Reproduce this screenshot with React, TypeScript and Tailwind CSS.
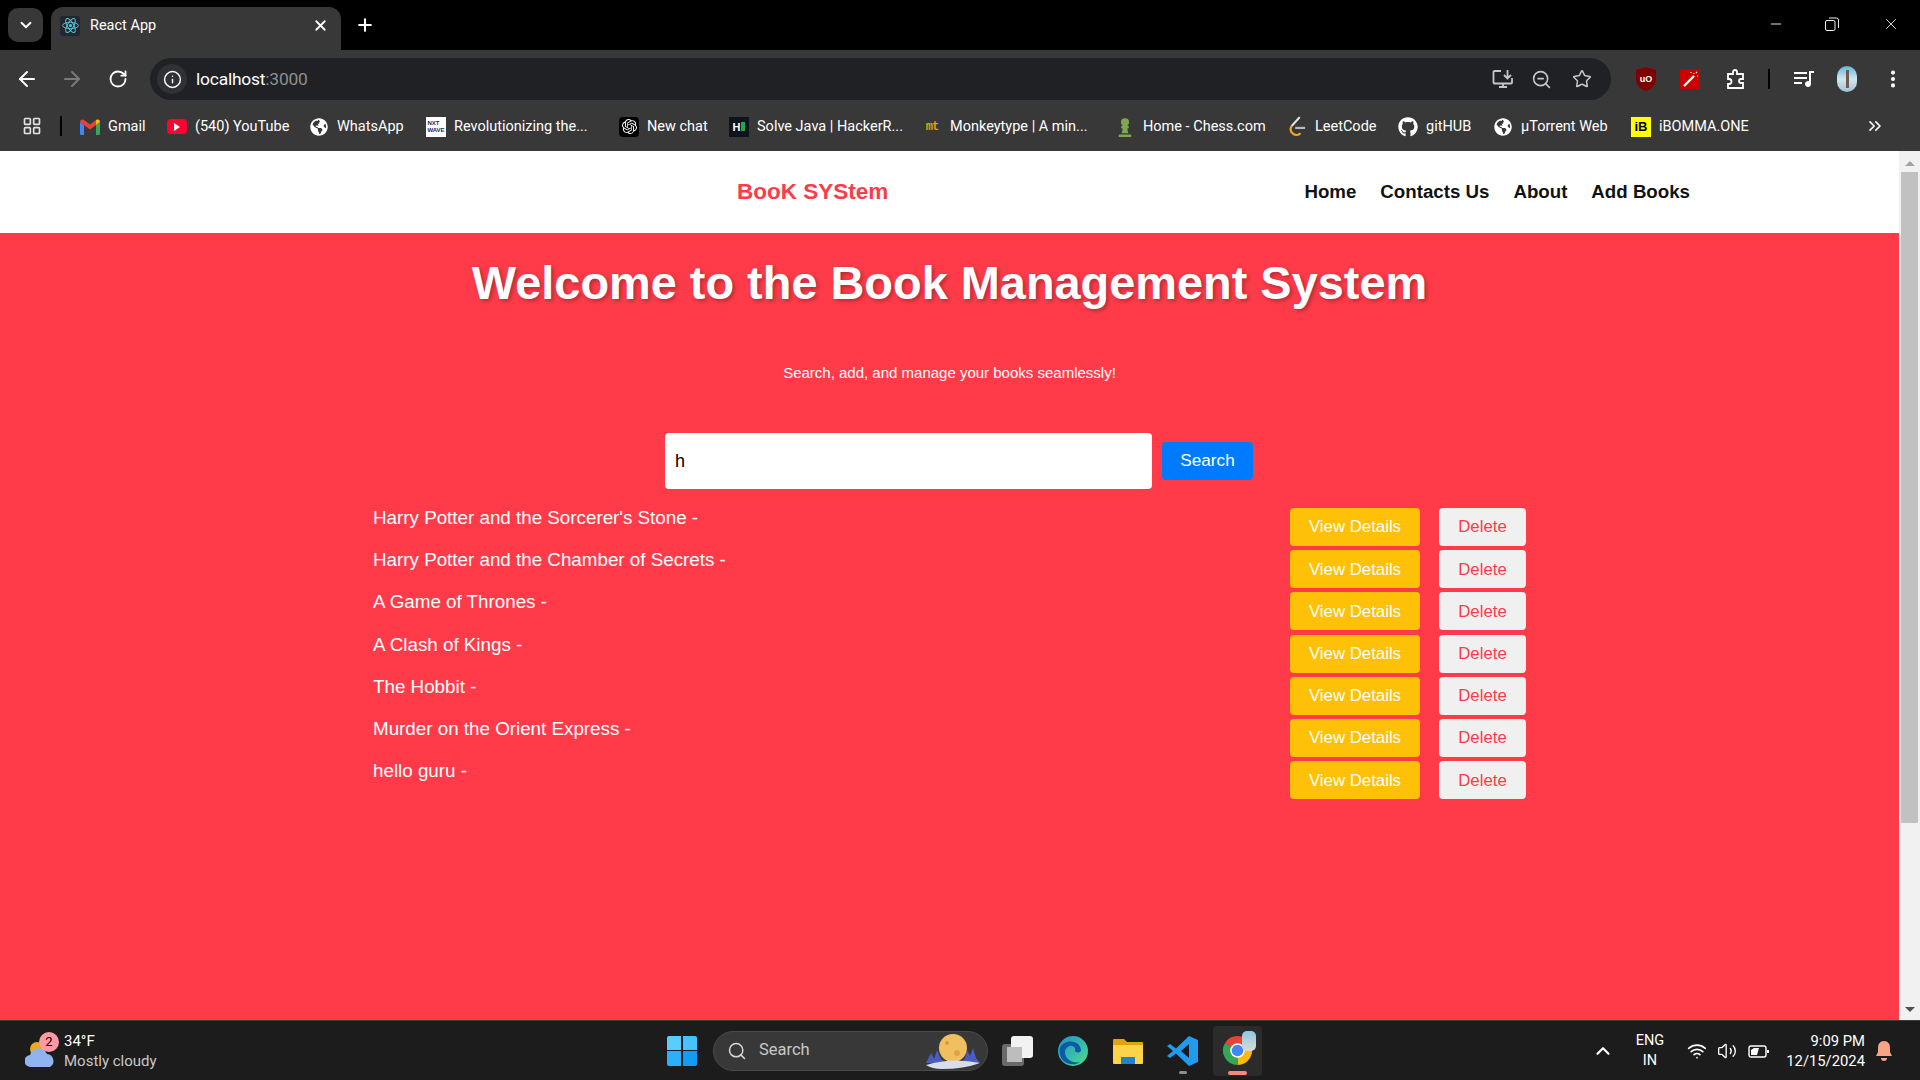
import { ArrowLeft, ArrowRight, ChevronDown, ChevronUp, ChevronsRight, EllipsisVertical, Info, LayoutGrid, Minus, Plus, RotateCw, Search, Star, Volume2, Wifi, X, ZoomOut } from 'lucide-react'
import { FaChessPawn, FaGithub, FaGlobeAmericas } from 'react-icons/fa'
import { SiOpenai } from 'react-icons/si'
import type { ReactNode } from 'react'

const books = [
  "Harry Potter and the Sorcerer's Stone",
  'Harry Potter and the Chamber of Secrets',
  'A Game of Thrones',
  'A Clash of Kings',
  'The Hobbit',
  'Murder on the Orient Express',
  'hello guru',
]

function ReactLogo({ className }: { className: string }) {
  return (
    <svg viewBox="0 0 24 24" fill="none" stroke="#58c4dc" strokeWidth="1.2" className={className}>
      <circle cx="12" cy="12" r="2" fill="#58c4dc" stroke="none" />
      <ellipse cx="12" cy="12" rx="10" ry="4" />
      <ellipse cx="12" cy="12" rx="10" ry="4" transform="rotate(60 12 12)" />
      <ellipse cx="12" cy="12" rx="10" ry="4" transform="rotate(120 12 12)" />
    </svg>
  )
}

function GmailLogo() {
  return (
    <svg viewBox="0 0 20 16" className="h-4 w-5">
      <path d="M0 3v11.5A1.5 1.5 0 0 0 1.5 16H4V6z" fill="#4285f4" />
      <path d="M16 6v10h2.5a1.500 1.500 0 0 0 1.500-1.500V3z" fill="#34a853" />
      <path d="M0 3a2.500 2.500 0 0 1 4-2l6 4.500L16 1a2.500 2.500 0 0 1 4 2l-4 3-6 4.500L4 6z" fill="#ea4335" />
      <path d="M16 1a2.500 2.500 0 0 1 4 2l-4 3z" fill="#fbbc04" />
    </svg>
  )
}

function YouTubeLogo() {
  return (
    <div className="flex h-[15px] w-5 items-center justify-center rounded-[4px] bg-[#ff0033]">
      <div className="h-0 w-0 border-y-[4px] border-l-[6px] border-y-transparent border-l-white" />
    </div>
  )
}

function LeetLogo() {
  return (
    <svg viewBox="0 0 20 24" fill="none" strokeWidth="2.400" className="h-6 w-[18px]">
      <path d="M13 1 4 11" stroke="#e8e8e8" />
      <path d="M4 11c-2 3-1 6 1 8s6 3 9 0" stroke="#f5a623" />
      <path d="M8 13h11" stroke="#b8b8b8" />
    </svg>
  )
}

function ChromeLogo() {
  return (
    <svg viewBox="0 0 32 32" className="h-[31px] w-[31px]">
      <path d="M16 16 3 8.500A15 15 0 0 1 29 8.500z" fill="#ea4335" />
      <path d="M16 16 29 8.500A15 15 0 0 1 16 31z" fill="#fbbc04" />
      <path d="M16 16 16 31A15 15 0 0 1 3 8.500z" fill="#34a853" />
      <circle cx="16" cy="16" r="7.500" fill="#fff" />
      <circle cx="16" cy="16" r="6" fill="#4285f4" />
    </svg>
  )
}

function TabBar() {
  return (
    <div className="flex h-[50px] items-end bg-black text-white">
      <div className="mb-2 ml-2 flex h-[34px] w-[35px] items-center justify-center rounded-[10px] bg-[#383838]">
        <ChevronDown size={18} strokeWidth={2.500} />
      </div>
      <div className="ml-2 flex h-[43px] w-[290px] items-center rounded-t-[12px] bg-[#383838] pb-[6px] pl-[9px] pr-[12px]">
        <div className="flex h-5 w-5 items-center justify-center rounded-[3px] bg-[#23272f]">
          <ReactLogo className="h-[19px] w-[19px]" />
        </div>
        <span className="ml-[10px] flex-1 font-['Roboto',sans-serif] text-[14.500px]">React App</span>
        <X size={17} strokeWidth={2.500} />
      </div>
      <Plus size={20} strokeWidth={2.500} className="mb-[15px] ml-[14px]" />
      <div className="mb-[17px] ml-auto mr-[20px] flex items-center text-[#f0f0f0]">
        <Minus size={16} strokeWidth={1.400} />
        <svg viewBox="0 0 14 14" fill="none" stroke="currentColor" className="ml-[41px] h-[14px] w-[14px]">
          <rect x="0.500" y="3.500" width="9.500" height="10" rx="1.500" />
          <path d="M4 1h7.500A2 2 0 0 1 13.500 3v8" />
        </svg>
        <X size={18} strokeWidth={1.200} className="ml-[43px]" />
      </div>
    </div>
  )
}

function ToolBar() {
  return (
    <div className="flex h-[50px] items-start bg-[#383838] pt-2 text-white">
      <div className="ml-[15px] flex h-[42px] items-center">
        <ArrowLeft size={24} strokeWidth={2} />
        <ArrowRight size={24} strokeWidth={2} className="ml-[21px] text-[#7a7a7a]" />
        <RotateCw size={20} strokeWidth={2.200} className="ml-6" />
      </div>
      <div className="ml-[22px] flex h-[42px] w-[1461px] items-center rounded-full bg-[#202124] pl-[7px] pr-[19px]">
        <div className="flex h-[30px] w-[30px] items-center justify-center rounded-full bg-[#303134]">
          <Info size={19} strokeWidth={1.800} />
        </div>
        <span className="ml-[9px] flex-1 pt-[1px] font-['Roboto',sans-serif] text-[17.400px] tracking-[-0.2px]">
          localhost<span className="text-[#8f8f8f]">:3000</span>
        </span>
        <svg viewBox="0 0 22 20" fill="none" stroke="#c4c7c5" strokeWidth="1.800" className="h-5 w-[22px]">
          <path d="M9 2H2.500a1 1 0 0 0-1 1v10.500a1 1 0 0 0 1 1H19a1 1 0 0 0 1-1V9M7 18h8M11 15v3M15.500 1v8M12 6l3.500 3.500L19 6" />
        </svg>
        <ZoomOut size={21} strokeWidth={1.800} className="ml-[17px] text-[#c4c7c5]" />
        <Star size={20} strokeWidth={1.800} className="ml-[20px] text-[#c4c7c5]" />
      </div>
      <div className="ml-[25px] flex h-[42px] items-center">
        <svg viewBox="0 0 20 24" className="h-6 w-5">
          <path d="M10 0 20 3v9c0 6-4 10-10 12C4 22 0 18 0 12V3z" fill="#800000" />
          <text x="10" y="15" textAnchor="middle" fontSize="9" fontWeight="700" fill="#fff" fontFamily="Liberation Sans, sans-serif">uO</text>
        </svg>
        <div className="ml-[24px] flex h-5 w-5 items-center justify-center bg-[#cc0000]">
          <svg viewBox="0 0 20 20" fill="none" stroke="#fff" strokeWidth="2.400" className="h-5 w-5">
            <path d="M4 17 14 7" />
            <path d="M14 4v1M17 7h1M11 3v1M16 3l1 1" strokeWidth="1.200" />
          </svg>
        </div>
        <svg viewBox="0 0 20 20" fill="none" stroke="#fff" strokeWidth="1.800" className="ml-[26px] h-5 w-5">
          <path d="M2 5h5V3a2 2 0 0 1 4 0v2h6v5h-2a2 2 0 0 0 0 4h2v5H2v-4h1a2.500 2.500 0 0 0 0-5H2z" />
        </svg>
        <div className="ml-[22px] h-5 w-[2px] bg-black" />
        <svg viewBox="0 0 20 20" fill="#fff" className="ml-[24px] h-5 w-5">
          <path d="M0 3h13v2H0zM0 8h13v2H0zM0 13h8v2H0zM15 2h5v2h-3v11a3 3 0 1 1-2-2.800z" />
        </svg>
        <div className="ml-[23px] flex h-[26px] w-[20px] justify-center overflow-hidden rounded-full bg-gradient-to-b from-[#5fb4dc] via-[#d5e6ee] to-[#9fc2d4]">
          <div className="mt-1 h-[18px] w-[3px] bg-[#6d5b50]" />
        </div>
        <EllipsisVertical size={22} strokeWidth={2.500} className="ml-[25px]" />
      </div>
    </div>
  )
}

function Bookmark({ icon, label, className }: { icon: ReactNode; label: string; className: string }) {
  return (
    <div className={`flex shrink-0 items-center ${className}`}>
      <div className="flex h-5 w-5 shrink-0 items-center justify-center">{icon}</div>
      <span className="ml-2 whitespace-nowrap pt-[1px]">{label}</span>
    </div>
  )
}

function BookmarksBar() {
  return (
    <div className="flex h-[51px] items-start bg-[#383838] pt-[16px] font-['Roboto',sans-serif] text-[14.500px] leading-5 text-white">
      <LayoutGrid size={20} strokeWidth={2} className="ml-[22px] shrink-0 text-[#e3e3e3]" />
      <div className="ml-[18px] h-5 w-[2px] shrink-0 bg-black" />
      <Bookmark className="ml-[18px] w-[67px]" icon={<GmailLogo />} label="Gmail" />
      <Bookmark className="ml-[20px] w-[124px]" icon={<YouTubeLogo />} label="(540) YouTube" />
      <Bookmark className="ml-[18px] w-[97px]" icon={<FaGlobeAmericas size={18} />} label="WhatsApp" />
      <Bookmark
        className="ml-[20px] w-[166px]"
        icon={
          <div className="flex h-5 w-5 items-center justify-center bg-white font-['Liberation_Sans',sans-serif] text-[6px] font-bold leading-[7px] text-[#1a2a5a]">
            NXT<br />WAVE
          </div>
        }
        label="Revolutionizing the..."
      />
      <Bookmark
        className="ml-[27px] w-[90px]"
        icon={
          <div className="flex h-5 w-5 items-center justify-center rounded-[4px] bg-black">
            <SiOpenai size={15} />
          </div>
        }
        label="New chat"
      />
      <Bookmark
        className="ml-[20px] w-[172px]"
        icon={
          <div className="flex h-5 w-5 items-center justify-center gap-[1px] bg-[#0e141e]">
            <span className="font-['Liberation_Sans',sans-serif] text-[11px] font-bold">H</span>
            <div className="h-[9px] w-[4px] bg-[#1ba94c]" />
          </div>
        }
        label="Solve Java | HackerR..."
      />
      <Bookmark
        className="ml-[21px] w-[170px]"
        icon={<span className="font-['Liberation_Mono',monospace] text-[12px] font-bold tracking-[-1px] text-[#d8a600]">mt</span>}
        label="Monkeytype | A min..."
      />
      <Bookmark className="ml-[23px] w-[149px]" icon={<FaChessPawn size={20} className="text-[#7fa650]" />} label="Home - Chess.com" />
      <Bookmark className="ml-[23px] w-[88px]" icon={<LeetLogo />} label="LeetCode" />
      <Bookmark className="ml-[23px] w-[74px]" icon={<FaGithub size={20} />} label="gitHUB" />
      <Bookmark className="ml-[21px] w-[115px]" icon={<FaGlobeAmericas size={18} />} label="µTorrent Web" />
      <Bookmark
        className="ml-[23px] w-[121px]"
        icon={
          <div className="flex h-5 w-5 items-center justify-center bg-[#ffff00] font-['Liberation_Sans',sans-serif] text-[13px] font-bold text-black">
            iB
          </div>
        }
        label="iBOMMA.ONE"
      />
      <ChevronsRight size={20} strokeWidth={2} className="ml-[113px] shrink-0" />
    </div>
  )
}

function NavBar() {
  return (
    <nav className="flex h-[82px] shrink-0 items-center bg-white pl-[737px] pr-[209px] font-bold">
      <span className="text-[22.500px] text-[#ff3b4a]">BooK SYStem</span>
      <div className="ml-auto flex gap-[24px] text-[18.700px] text-[#111]">
        <a>Home</a>
        <a>Contacts Us</a>
        <a>About</a>
        <a>Add Books</a>
      </div>
    </nav>
  )
}

function BookRow({ title }: { title: string }) {
  return (
    <li className="flex h-[42.200px] items-start text-[16.800px]">
      <span className="flex-1 text-[18.800px] leading-5 text-white">{title} -</span>
      <button className="h-[38px] w-[130px] rounded-[4px] bg-[#ffc107] text-white">View Details</button>
      <button className="ml-[19px] h-[38px] w-[87px] rounded-[4px] bg-[#f0f0f0] text-[#ff3b4a]">Delete</button>
    </li>
  )
}

function Hero() {
  return (
    <main className="flex flex-1 flex-col bg-[#ff3b4a] pt-[23px]">
      <h1 className="text-center text-[46.900px] font-bold leading-[55px] text-white [text-shadow:2px_2px_4px_rgba(0,0,0,0.3)]">
        Welcome to the Book Management System
      </h1>
      <p className="mt-[53px] text-center text-[15px] leading-[18px] text-white">
        Search, add, and manage your books seamlessly!
      </p>
      <div className="ml-[665px] mt-[51px] flex items-center">
        <input
          readOnly
          value="h"
          className="h-[56px] w-[487px] rounded-[4px] bg-white px-[10px] text-[18px] text-black outline-none"
        />
        <button className="ml-[10px] h-[38px] w-[91px] rounded-[4px] bg-[#007bff] text-[17.200px] text-white">Search</button>
      </div>
      <ul className="ml-[373px] mt-[19px] w-[1153px]">
        {books.map((book) => (
          <BookRow key={book} title={book} />
        ))}
      </ul>
    </main>
  )
}

function ScrollBar() {
  return (
    <div className="flex w-[21px] shrink-0 flex-col items-center bg-[#f1f1f1]">
      <div className="mt-[10px] h-0 w-0 border-x-[5px] border-b-[5px] border-x-transparent border-b-[#a3a3a3]" />
      <div className="mt-[6px] h-[651px] w-[17px] bg-[#c1c1c1]" />
      <div className="mb-[8px] mt-auto h-0 w-0 border-x-[5px] border-t-[5px] border-x-transparent border-t-[#505050]" />
    </div>
  )
}

function TaskBar() {
  return (
    <div className="flex h-[60px] shrink-0 items-center border-t border-[#3a3a3a] bg-[#1c1c1c] font-['Roboto',sans-serif] text-white">
      <div className="ml-[25px] flex w-[642px] items-center">
        <div className="relative h-[36px] w-[32px]">
          <svg viewBox="0 0 32 36" className="h-[36px] w-[32px]">
            <circle cx="12" cy="16" r="7" fill="#f2a81d" />
            <path d="M6 34a6 6 0 0 1-1-12 9 9 0 0 1 17-1 7 7 0 0 1 3 13z" fill="#8fb4f0" />
          </svg>
          <div className="absolute -top-[1px] left-[14px] flex h-5 w-5 items-center justify-center rounded-full bg-[#ff9aa5] text-[13px] text-black">2</div>
        </div>
        <div className="ml-[7px] text-[15px] leading-[20px]">
          <div>34°F</div>
          <div className="text-[#c8c8c8]">Mostly cloudy</div>
        </div>
      </div>
      <div className="grid h-[30px] w-[30px] grid-cols-2 gap-[1.500px]">
        <div className="rounded-tl-[2px] bg-[#59cdff]" />
        <div className="rounded-tr-[2px] bg-[#45c2ff]" />
        <div className="rounded-bl-[2px] bg-[#2bb0fb]" />
        <div className="rounded-br-[2px] bg-[#129cf5]" />
      </div>
      <div className="ml-[16px] flex h-[40px] w-[275px] items-center rounded-full border border-[#4a4a4a] bg-[#383838] pl-[13px] pr-[6px]">
        <Search size={20} strokeWidth={1.800} className="text-[#d8d8d8]" />
        <span className="ml-[12px] flex-1 text-[16.500px] text-[#c8c8c8]">Search</span>
        <svg viewBox="0 0 56 36" className="h-[36px] w-[56px]">
          <circle cx="28" cy="15" r="14" fill="#f0c060" />
          <circle cx="22" cy="10" r="2" fill="#d89a48" />
          <circle cx="32" cy="20" r="3" fill="#e0a050" />
          <path d="M1 30 6 20l3 6 3-9 4 9 6 4H36l4-5 2-8 3 6 3-8 3 10 4 5z" fill="#4a5cc0" />
          <path d="M1 32q26-8 54-2-16 6-38 6-10 0-16-4z" fill="#d8dde8" />
        </svg>
      </div>
      <div className="relative ml-[14px] h-[30px] w-[31px]">
        <div className="absolute bottom-0 left-0 h-[22px] w-[22px] rounded-[3px] bg-[#6a6a6a]" />
        <div className="absolute right-0 top-0 h-[22px] w-[22px] rounded-[3px] bg-[#f2f2f2]" />
        <div className="absolute bottom-[4px] left-[5px] h-[15px] w-[15px] bg-[#bdbdbd]" />
      </div>
      <svg viewBox="0 0 30 30" className="ml-[25px] h-[30px] w-[30px]">
        <defs>
          <linearGradient id="edgeTop" x1="0" y1="0" x2="1" y2="1">
            <stop offset="0" stopColor="#1a8fd0" />
            <stop offset="1" stopColor="#50e08a" />
          </linearGradient>
        </defs>
        <circle cx="15" cy="15" r="15" fill="url(#edgeTop)" />
        <path d="M2 12C5 3 22 3 23 14c0 3-5 3-6 1 2-6-8-8-10 0-1 7 7 13 15 11-8 6-23 0-20-14z" fill="#0c59a4" />
      </svg>
      <svg viewBox="0 0 30 28" className="ml-[25px] h-[30px] w-[30px]">
        <path d="M0 3a1 1 0 0 1 1-1h10l3 3h15a1 1 0 0 1 1 1v4H0z" fill="#e0a30e" />
        <path d="M0 8h30v18a1 1 0 0 1-1 1H1a1 1 0 0 1-1-1z" fill="#fdd34a" />
        <rect x="8" y="20" width="14" height="7" fill="#1b84d0" />
      </svg>
      <div className="relative ml-[24px] h-[30px] w-[31px]">
        <svg viewBox="0 0 31 30" className="h-[30px] w-[31px]">
          <path d="M22 0 31 4v22l-9 4L9 17.500 3 22 0 20l6-5-6-5 3-2 6 4.500z" fill="#1f9cf0" />
          <path d="M22 8 14 15l8 7z" fill="#1c1c1c" />
        </svg>
        <div className="absolute -bottom-[8px] left-[12px] h-[3px] w-[8px] rounded-full bg-[#8e8e8e]" />
      </div>
      <div className="relative ml-[15px] flex h-[50px] w-[49px] items-center justify-center rounded-[4px] bg-[#2b2b2b]">
        <ChromeLogo />
        <div className="absolute right-[6px] top-[5px] h-[20px] w-[14px] rounded-[5px] bg-gradient-to-b from-[#8ec8e0] to-[#d8d8d8]" />
        <div className="absolute bottom-[1px] left-[15px] h-[4px] w-[19px] rounded-full bg-[#f28b78]" />
      </div>
      <ChevronUp size={22} strokeWidth={2.400} className="ml-[330px]" />
      <div className="ml-[20px] w-[32px] text-center text-[14.500px] leading-[20px]">
        <div>ENG</div>
        <div>IN</div>
      </div>
      <Wifi size={20} strokeWidth={2} className="ml-[21px]" />
      <Volume2 size={20} strokeWidth={1.600} className="ml-[10px]" />
      <svg viewBox="0 0 22 18" fill="none" stroke="#fff" strokeWidth="1.400" className="ml-[11px] h-[18px] w-[22px]">
        <rect x="1" y="4" width="17" height="11" rx="2" />
        <path d="M3 13V8l3-2h5l-2 7z" fill="#fff" stroke="none" />
        <path d="M20 8v3" strokeWidth="2" />
      </svg>
      <div className="ml-[7px] w-[88px] text-right text-[14.800px] leading-[20px]">
        <div>9:09 PM</div>
        <div>12/15/2024</div>
      </div>
      <svg viewBox="0 0 16 20" fill="#f8a585" className="ml-[11px] h-5 w-4">
        <path d="M8 0c4 0 6 3 6 7v4l2 4H0l2-4V7c0-4 2-7 6-7zM5 17h6a3 3 0 0 1-6 0z" />
      </svg>
    </div>
  )
}

export default function App() {
  return (
    <div className="flex h-screen flex-col overflow-hidden font-['Liberation_Sans',sans-serif]">
      <TabBar />
      <ToolBar />
      <BookmarksBar />
      <div className="flex min-h-0 flex-1">
        <div className="flex flex-1 flex-col">
          <NavBar />
          <Hero />
        </div>
        <ScrollBar />
      </div>
      <TaskBar />
    </div>
  )
}
